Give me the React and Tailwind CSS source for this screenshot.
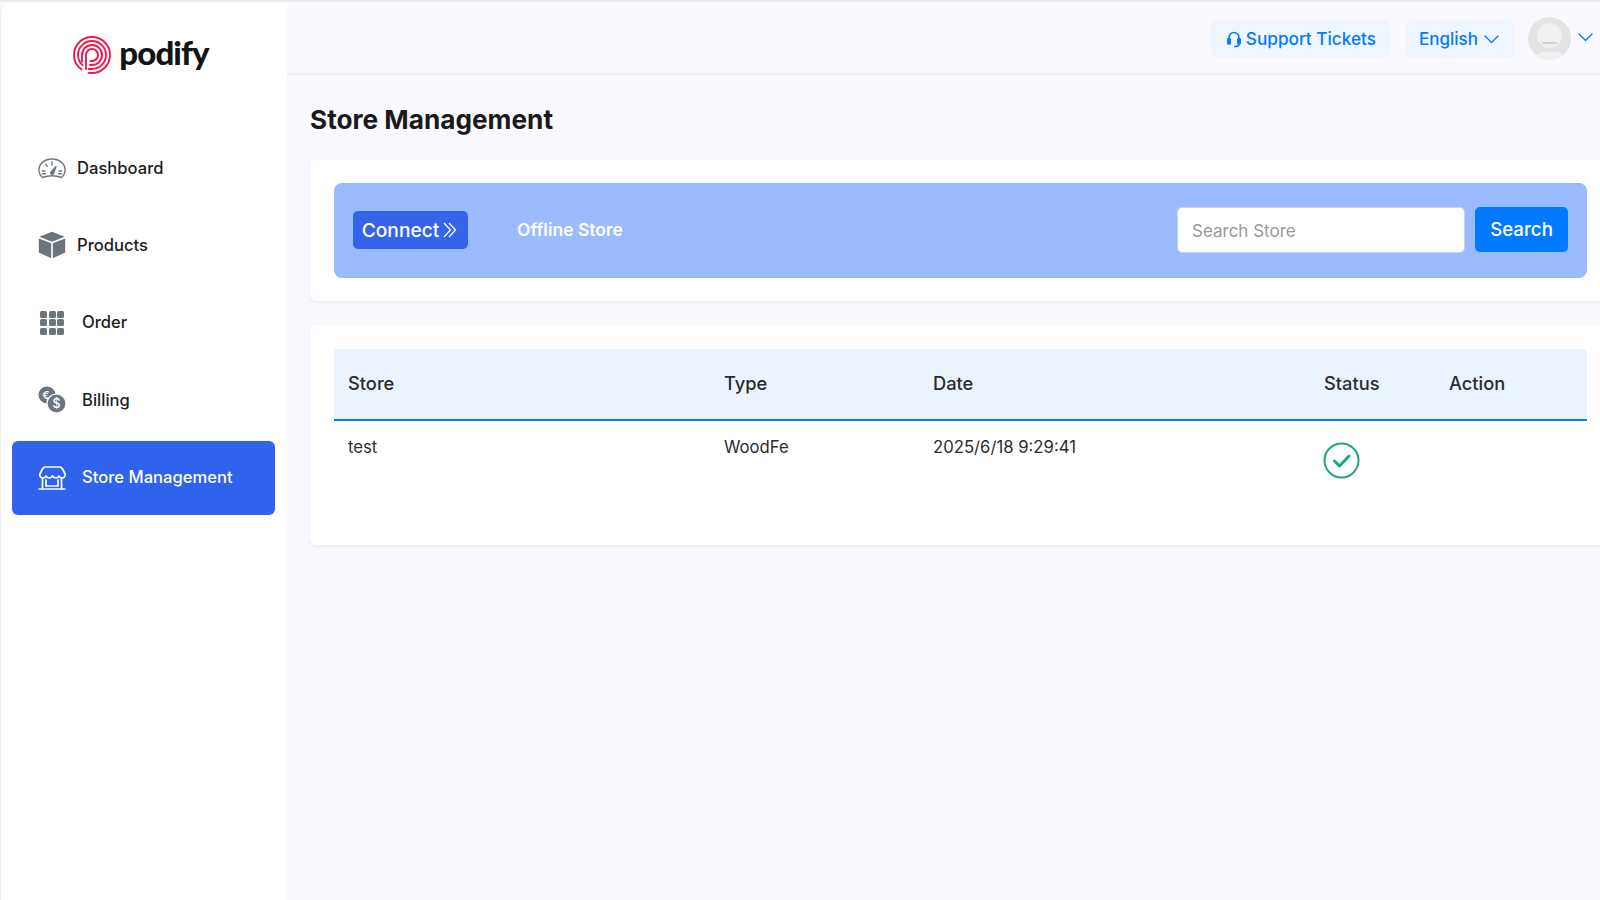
import React from "react";

const DashboardIcon = () => (
  <svg width="28" height="21" viewBox="0 0 28 21" fill="none" stroke="#6c757d" strokeWidth="1.400" strokeLinecap="round" strokeLinejoin="round">
    <path d="M4.500 19.500c-2.200-1.800-3.600-4.600-3.600-7.700C.9 5.800 6.800 1 14 1s13.100 4.800 13.100 10.800c0 3.100-1.400 5.900-3.600 7.700-2.600-1.100-5.900-1.700-9.500-1.700s-6.900.6-9.500 1.700z" />
    <path d="M14 4v3M7.800 6.300l1.500 2M4.300 12.600l2.700.7M4.500 15.800h3M20.500 15.800h3M23.700 12.600l-2.700.7" />
    <path d="M12.800 14.400l5.200-6-2.600 7.300c-.6 1-3.200.2-2.600-1.300z" fill="#6c757d" />
  </svg>
);

const CubeIcon = () => (
  <svg width="28" height="28" viewBox="0 0 28 28">
    <path d="M14 .8L1.200 5.800 14 10.800l12.800-5L14 .8z" fill="#6c757d" />
    <path d="M.8 7.400v14.200L13.200 27.200V12.300L.8 7.400z" fill="#6c757d" />
    <path d="M27.200 7.400v14.200L14.800 27.200V12.300l12.400-4.900z" fill="#6c757d" />
  </svg>
);

const GridIcon = () => (
  <div className="ml-[2px] grid w-[24px] grid-cols-3 gap-[1.500px]">
    {Array.from({ length: 9 }).map((_, i) => (
      <span key={i} className="h-[7px] w-[7px] rounded-[1.500px] bg-[#6c757d]" />
    ))}
  </div>
);

const BillingIcon = () => (
  <svg width="28" height="28" viewBox="0 0 28 28">
    <circle cx="9" cy="9" r="8.500" fill="#6c757d" />
    <text x="8" y="13" fontSize="11" fontWeight="600" fill="#fff" textAnchor="middle" fontFamily="Inter, sans-serif">€</text>
    <circle cx="18.500" cy="17.500" r="9.500" fill="#6c757d" stroke="#fff" strokeWidth="1.200" />
    <text x="18.500" y="22" fontSize="12.500" fontWeight="500" fill="#fff" textAnchor="middle" fontFamily="Inter, sans-serif">$</text>
  </svg>
);

const StoreIcon = () => (
  <svg width="28" height="24" viewBox="0 0 28 24" fill="none" stroke="#fff" strokeWidth="1.700" strokeLinejoin="round" strokeLinecap="round">
    <path d="M6.500 1h15c1.500 0 2.300.8 3 2l2.600 5c.5 2.600-1.300 4-3 4-1.500 0-2.600-.8-3.100-2-.5 1.200-1.600 2-3.200 2s-2.500-.8-3-2h-.6c-.5 1.200-1.400 2-3 2s-2.700-.8-3.200-2c-.5 1.200-1.600 2-3.100 2-1.700 0-3.500-1.400-3-4l2.600-5c.7-1.200 1.500-2 3-2z" />
    <path d="M4.500 12.500V23M23.500 12.500V23M1 23h26" />
    <path d="M8 14v6h12v-6" />
  </svg>
);

const Logo = () => (
  <svg width="38" height="38" viewBox="0 0 38 38" fill="none" stroke="#f4174f" strokeWidth="1.900" strokeLinecap="round">
    <path d="M8.500 33.500C3.900 30.200 1 24.900 1 19 1 9 9 1 19 1s18 8 18 18-8 18-18 18c-1.200 0-2.300-.1-3.400-.3" />
    <path d="M9.500 29c-2.800-2.500-4.500-6-4.500-10C5 11.300 11.300 5 19 5s14 6.300 14 14-6.300 14-14 14h-3.400" />
    <path d="M13 33V19c0-3.300 2.700-6 6-6s6 2.700 6 6-2.700 6-6 6h-1.500" />
    <path d="M9 25.500V19c0-5.500 4.500-10 10-10s10 4.500 10 10-4.500 10-10 10h-2" />
  </svg>
);

const Chevron = ({ className }) => (
  <svg className={className} width="15" height="9" viewBox="0 0 15 9" fill="none" stroke="#007bff" strokeWidth="1.300" strokeLinecap="round" strokeLinejoin="round">
    <path d="M1 1l6.500 6.500L14 1" />
  </svg>
);

const NavItem = ({ icon, label, active, iconWidth }) => (
  <div className={`flex h-[74px] items-center rounded-[6px] pl-[26px] ${active ? "bg-[#2f62ed] text-white" : "text-[#1c1c1c]"}`}>
    <div className={`flex items-center justify-center ${iconWidth}`}>{icon}</div>
    <span className="text-[16.600px] font-medium">{label}</span>
  </div>
);

const App = () => {
  return (
    <div className="flex h-[900px] w-[1600px] overflow-hidden border-t-2 border-[#ececec] bg-[#f9f9ff] font-['Inter',sans-serif]">
      {/* Sidebar */}
      <aside className="h-full w-[287px] shrink-0 rounded-tl-[12px] border-l border-[#ececec] bg-white pl-[11px] pr-[12px]">
        <div className="flex h-[72px] items-center justify-center pt-[33px] pr-[5px]">
          <div className="flex items-center gap-[8px]">
            <Logo />
            <span className="mb-[3px] font-['Lato',sans-serif] text-[33px] font-black tracking-[-0.900px] text-[#141414]">podify</span>
          </div>
        </div>
        <nav className="mt-[57px] flex flex-col gap-[3.400px]">
          <NavItem icon={<DashboardIcon />} label="Dashboard" iconWidth="w-[39px] justify-start" />
          <NavItem icon={<CubeIcon />} label="Products" iconWidth="w-[39px] justify-start" />
          <NavItem icon={<GridIcon />} label="Order" iconWidth="w-[44px] justify-start" />
          <NavItem icon={<BillingIcon />} label="Billing" iconWidth="w-[44px] justify-start" />
          <NavItem icon={<StoreIcon />} label="Store Management" iconWidth="w-[44px] justify-start" active />
        </nav>
      </aside>

      {/* Main */}
      <div className="flex min-w-0 flex-1 flex-col">
        <header className="flex h-[73px] shrink-0 items-center justify-end border-b-2 border-[#f0f0f4] pr-[7px] pt-[3px]">
          <div className="flex h-[38px] items-center gap-[5px] rounded-[6px] bg-[#f0f6ff] pl-[16px] pr-[14px] text-[17.200px] font-medium text-[#007bff]">
            <svg width="14" height="17" viewBox="0 0 14 17" fill="none" stroke="#007bff" strokeWidth="1.500">
              <path d="M2 10V6.500a5 5 0 0 1 10 0V10" />
              <rect x=".8" y="7.500" width="2.400" height="5.500" rx="1.100" fill="#007bff" />
              <rect x="10.800" y="7.500" width="2.400" height="5.500" rx="1.100" fill="#007bff" />
              <path d="M12 13c0 1.600-1.300 2.500-3 2.500H7" />
            </svg>
            <span>Support Tickets</span>
          </div>
          <div className="ml-[15px] flex h-[38px] items-center gap-[6px] rounded-[6px] bg-[#f0f6ff] pl-[14px] pr-[15px] text-[17px] font-medium text-[#007bff]">
            <span className="pt-[1px]">English</span>
            <Chevron />
          </div>
          <div className="relative mb-[2px] ml-[14px] h-[43px] w-[43px] overflow-hidden rounded-full bg-[#e3e3e3]">
            <div className="absolute left-[9px] top-[6px] h-[25px] w-[25px] rounded-full bg-[#f0f0f0]" />
            <div className="absolute left-[14px] top-[25px] h-[2px] w-[15px] rounded-full bg-[#d2d2d2]" />
            <div className="absolute left-[4px] top-[35px] h-[24px] w-[35px] rounded-full bg-[#f0f0f0]" />
          </div>
          <Chevron className="mb-[4px] ml-[7px]" />
        </header>

        <main className="w-[1324px] flex-1 pl-[23px]">
          <h1 className="mt-[29px] text-[26.200px] font-bold leading-[32px] text-[#1a1a1a]">Store Management</h1>

          <section className="mt-[23px] rounded-[6px] bg-white px-[24px] pb-[23px] pt-[24px] shadow-[0_2px_4px_rgba(0,0,0,0.06)]">
            <div className="flex h-[95px] items-center rounded-[8px] bg-[#9abbff] pl-[19px] pr-[19px]">
              <button className="mb-[2px] flex h-[38px] w-[115px] items-center justify-center gap-[4px] rounded-[5px] bg-[#3563e9] pr-[2px] pt-[1px] text-[19.200px] font-medium text-white">
                Connect
                <svg width="14" height="16" viewBox="0 0 14 16" fill="none" stroke="#fff" strokeWidth="1.300">
                  <path d="M1 1l6.500 7L1 15M6 1l6.500 7L6 15" />
                </svg>
              </button>
              <span className="ml-[49px] text-[17.500px] font-semibold text-white">Offline Store</span>
              <input
                placeholder="Search Store"
                className="mb-[2px] ml-auto h-[46px] w-[288px] rounded-[5px] border border-[#ced4da] bg-white px-[14px] pt-[2px] text-[17px] outline-none placeholder:text-[#9a9a9a]"
              />
              <button className="mb-[2px] ml-[10px] h-[45px] w-[93px] rounded-[5px] bg-[#007bff] pt-[1px] text-[18.700px] font-medium text-white">Search</button>
            </div>
          </section>

          <section className="mt-[24px] h-[220px] rounded-[6px] bg-white p-[24px] shadow-[0_2px_4px_rgba(0,0,0,0.06)]">
            <div className="grid h-[72px] grid-cols-[376px_209px_391px_125px_1fr] items-center border-b-2 border-[#007bff] bg-[#ebf3fe] pl-[14px] text-[18.300px] font-medium text-[#2b2b2b]">
              <span>Store</span>
              <span>Type</span>
              <span>Date</span>
              <span>Status</span>
              <span>Action</span>
            </div>
            <div className="grid grid-cols-[376px_209px_391px_125px_1fr] pl-[14px] pt-[14px] text-[16.700px] text-[#2b2b2b]">
              <span>test</span>
              <span>WoodFe</span>
              <span>2025/6/18 9:29:41</span>
              <span className="-ml-[1px] pt-[7px]">
                <svg width="37" height="37" viewBox="0 0 37 37" fill="none" stroke="#1aa884">
                  <circle cx="18.500" cy="18.500" r="17" strokeWidth="2" />
                  <path d="M11.500 19l5 5 9.500-10" strokeWidth="3" strokeLinecap="round" strokeLinejoin="round" />
                </svg>
              </span>
              <span />
            </div>
          </section>
        </main>
      </div>
    </div>
  );
};

export default App;
